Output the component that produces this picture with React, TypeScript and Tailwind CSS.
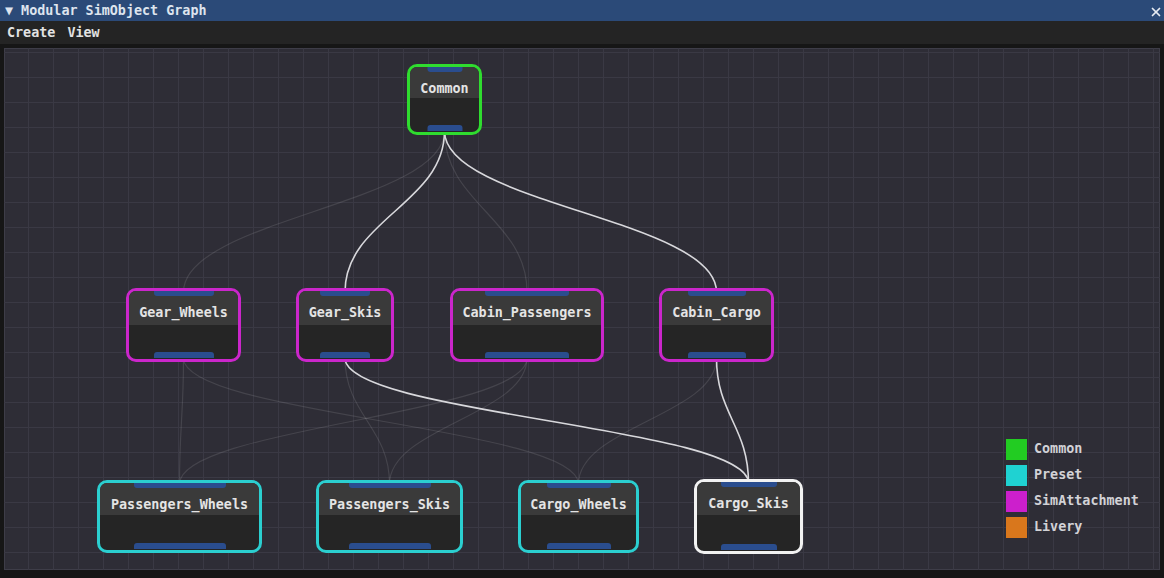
import { X } from 'lucide-react';

// canvas origin in page coordinates
const OX = 4;
const OY = 48;
const CW = 1156;
const CH = 522;

type GraphNode = {
  id: string;
  label: string;
  x: number;
  y: number;
  w: number;
  h: number;
  pin: number;
  header: number;
  border: string;
};

const nodes: GraphNode[] = [
  { id: 'common', label: 'Common', x: 407, y: 64, w: 75, h: 71, pin: 35, header: 31, border: 'border-[#2fdc2f]' },
  { id: 'gw', label: 'Gear_Wheels', x: 126, y: 288, w: 115, h: 74, pin: 60, header: 34, border: 'border-[#cb26cb]' },
  { id: 'gs', label: 'Gear_Skis', x: 296, y: 288, w: 98, h: 74, pin: 50, header: 34, border: 'border-[#cb26cb]' },
  { id: 'cp', label: 'Cabin_Passengers', x: 450, y: 288, w: 154, h: 74, pin: 84, header: 34, border: 'border-[#cb26cb]' },
  { id: 'cc', label: 'Cabin_Cargo', x: 659, y: 288, w: 115, h: 74, pin: 58, header: 34, border: 'border-[#cb26cb]' },
  { id: 'pw', label: 'Passengers_Wheels', x: 97, y: 480, w: 165, h: 73, pin: 92, header: 32, border: 'border-[#2bcfd0]' },
  { id: 'ps', label: 'Passengers_Skis', x: 316, y: 480, w: 147, h: 73, pin: 82, header: 32, border: 'border-[#2bcfd0]' },
  { id: 'cw', label: 'Cargo_Wheels', x: 518, y: 480, w: 121, h: 73, pin: 64, header: 32, border: 'border-[#2bcfd0]' },
  { id: 'cs', label: 'Cargo_Skis', x: 694, y: 479, w: 109, h: 75, pin: 56, header: 33, border: 'border-[#f2f2f2]' },
];

// [from, to, highlighted]
const links: [string, string, boolean][] = [
  ['common', 'gw', false],
  ['common', 'cp', false],
  ['gw', 'pw', false],
  ['gw', 'cw', false],
  ['gs', 'ps', false],
  ['cp', 'pw', false],
  ['cp', 'ps', false],
  ['cc', 'cw', false],
  ['common', 'gs', true],
  ['common', 'cc', true],
  ['gs', 'cs', true],
  ['cc', 'cs', true],
];

const legend = [
  { label: 'Common', color: 'bg-[#22cc22]' },
  { label: 'Preset', color: 'bg-[#1fd2d2]' },
  { label: 'SimAttachment', color: 'bg-[#cc1fcc]' },
  { label: 'Livery', color: 'bg-[#d9771c]' },
];

const byId = Object.fromEntries(nodes.map((n) => [n.id, n]));

function wirePath(a: GraphNode, b: GraphNode) {
  const x0 = a.x + a.w / 2;
  const y0 = a.y + a.h - 4;
  const x1 = b.x + b.w / 2;
  const y1 = b.y + 4;
  const d = (y1 - y0) * 0.45;
  return `M${x0} ${y0} C${x0} ${y0 + d} ${x1} ${y1 - d} ${x1} ${y1}`;
}

function Node({ n }: { n: GraphNode }) {
  return (
    <div
      className={`absolute flex flex-col rounded-[10px] border-[3px] overflow-hidden bg-[#252525] ${n.border}`}
      style={{ left: n.x - OX, top: n.y - OY, width: n.w, height: n.h }}
    >
      <div
        className="flex justify-center bg-[#3a3a3a] pt-[14px] text-[13.4px] leading-[16px] font-bold text-[#e4e4e4] whitespace-nowrap"
        style={{ height: n.header }}
      >
        {n.label}
      </div>
      <div
        className="absolute top-0 left-1/2 -translate-x-1/2 h-[5px] rounded-b-[3px] bg-[#2a4d8e]"
        style={{ width: n.pin }}
      />
      <div
        className="absolute bottom-[1px] left-1/2 -translate-x-1/2 h-[6px] rounded-t-[3px] bg-[#2a4d8e]"
        style={{ width: n.pin }}
      />
    </div>
  );
}

export default function App() {
  return (
    <div className="w-[1164px] h-[578px] flex flex-col bg-[#141414] overflow-hidden font-['DejaVu_Sans_Mono','Liberation_Mono',monospace]">
      {/* Title bar */}
      <div className="h-[21px] flex items-center justify-between bg-[#2b4a78] pl-[5px] pr-[1px] pt-[2px] text-[13.4px] font-bold text-[#dde4ee]">
        <span>▼ Modular SimObject Graph</span>
        <X className="w-[14px] h-[14px] text-[#e6ebf2]" strokeWidth={3} />
      </div>

      {/* Menu bar */}
      <div className="h-[23px] flex items-center gap-[12px] bg-[#242424] px-[7px] pt-[2px] text-[13.4px] font-bold text-[#e2e2e2]">
        <span>Create</span>
        <span>View</span>
      </div>

      {/* Canvas */}
      <div className="flex-1 px-[4px] pt-[4px] pb-[8px] bg-[#161616]">
        <div className="relative w-[1156px] h-[522px] bg-[#2e2d36] shadow-[inset_0_0_0_1px_#3e3d48] overflow-hidden">
          <svg
            className="absolute inset-0"
            width={CW}
            height={CH}
            viewBox={`${OX} ${OY} ${CW} ${CH}`}
          >
            <defs>
              <pattern id="grid" x="3" y="2" width="25" height="25" patternUnits="userSpaceOnUse">
                <path d="M0.5 0V25M0 0.5H25" stroke="#3a3944" strokeWidth="1" fill="none" />
              </pattern>
            </defs>
            <rect x={OX} y={OY} width={CW} height={CH} fill="url(#grid)" />
            {links.map(([f, t, hi]) => (
              <path
                key={f + t}
                d={wirePath(byId[f], byId[t])}
                fill="none"
                stroke={hi ? '#d8d8dc' : 'rgba(255,255,255,0.11)'}
                strokeWidth={hi ? 1.6 : 1.2}
              />
            ))}
          </svg>

          {nodes.map((n) => (
            <Node key={n.id} n={n} />
          ))}

          {/* Legend */}
          <div className="absolute left-[1002px] top-[391px] flex flex-col gap-[5px]">
            {legend.map((l) => (
              <div key={l.label} className="flex items-center gap-[7px]">
                <div className={`w-[21px] h-[21px] ${l.color}`} />
                <span className="text-[13.4px] font-bold text-[#d2d2d6]">{l.label}</span>
              </div>
            ))}
          </div>
        </div>
      </div>
    </div>
  );
}
